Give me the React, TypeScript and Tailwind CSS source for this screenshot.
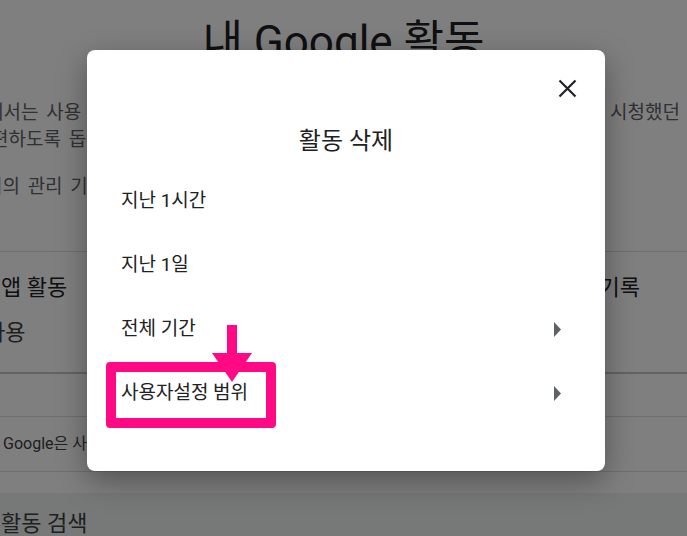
import React from 'react';

const rows = [
  { label: '지난 1시간', more: false },
  { label: '지난 1일', more: false },
  { label: '전체 기간', more: true },
  { label: '사용자설정 범위', more: true },
];

const Caret = () => (
  <svg width="7" height="15" viewBox="0 0 7 15" className="shrink-0">
    <polygon points="0,0 7,7.5 0,15" fill="#5f6368" />
  </svg>
);

const DeleteDialog = () => {
  return (
    <div className="relative w-[518px] rounded-[8px] bg-white shadow-[0_10px_30px_rgba(0,0,0,0.35)]">
      {/* close */}
      <div className="flex justify-end pr-[28px] pt-[29px]">
        <svg width="19" height="19" viewBox="0 0 19 19">
          <path d="M1.5 1.5 L17.5 17.5 M17.5 1.5 L1.5 17.5" stroke="#202124" strokeWidth="2.2" />
        </svg>
      </div>

      <h2 className="mt-[27px] text-center text-[24px] leading-[32px] text-[#202124]">활동 삭제</h2>

      <ul className="mt-[12px] pb-[46px]">
        {rows.map((r) => (
          <li key={r.label} className="flex h-[64px] items-center justify-between pl-[34px] pr-[44px]">
            <span className="text-[19px] text-[#202124]">{r.label}</span>
            {r.more && <Caret />}
          </li>
        ))}
      </ul>

      {/* annotation */}
      <div className="absolute left-[19px] top-[312px] h-[66px] w-[170px] rounded-[4px] border-[10px] border-[#ff0a84]" />
      <svg className="absolute left-[125px] top-[275px]" width="40" height="58" viewBox="0 0 40 58">
        <rect x="15" y="0" width="10" height="30" fill="#ff0a84" />
        <polygon points="0,28 40,28 20,57" fill="#ff0a84" />
      </svg>
    </div>
  );
};

export default function App() {
  return (
    <div className="relative h-[536px] w-full overflow-hidden bg-white font-[Roboto,'Noto_Sans_CJK_KR',sans-serif]">
      {/* page behind the dialog */}
      <div className="flex flex-col">
        <h1 className="pt-[14px] text-center text-[44px] leading-[56px] text-[#202124]">내 Google 활동</h1>

        <div className="mt-[29px] whitespace-nowrap text-[19px] leading-[27px] text-[#5f6368] [word-spacing:3px]">
          <div className="-ml-[14px] mr-[7px] flex justify-between">
            <span>에서는 사용 기록을 확인하고</span>
            <span>시청했던</span>
          </div>
          <div className="-ml-[9px]">
            <span>편하도록 돕습니다.</span>
          </div>
          <div className="-ml-[50px] mt-[20px]">
            <span>데이터의 관리 기능</span>
          </div>
        </div>

        <div className="mt-[51px] border-t border-[#dadce0]">
          <div className="flex h-[120px] flex-col pt-[22px]">
            <div className="mr-[47px] flex justify-between whitespace-nowrap text-[22px] leading-[28px] text-[#202124]">
              <span className="ml-[1px]">앱 활동</span>
              <span>위치 기록</span>
            </div>
            <div className="-ml-[15px] mt-[17px] text-[22px] leading-[28px] text-[#3c4043]">사용</div>
          </div>
        </div>

        <div className="h-[44px] border-t-2 border-[#c4c6ca]" />
        <div className="flex h-[56px] items-center border-y border-[#dadce0] pl-[3px] text-[16px] text-[#3c4043]">
          <span>Google은 사용자의 데이터를</span>
        </div>
        <div className="h-[21px]" />
        <div className="h-[60px] bg-[#eef0f1] pl-[1px] pt-[17px] text-[22px] leading-[28px] text-[#3c4043]">활동 검색</div>
      </div>

      {/* scrim */}
      <div className="absolute inset-0 bg-black/50" />

      {/* dialog */}
      <div className="absolute inset-0 flex items-start justify-center pl-[5px] pt-[50px]">
        <DeleteDialog />
      </div>
    </div>
  );
}
